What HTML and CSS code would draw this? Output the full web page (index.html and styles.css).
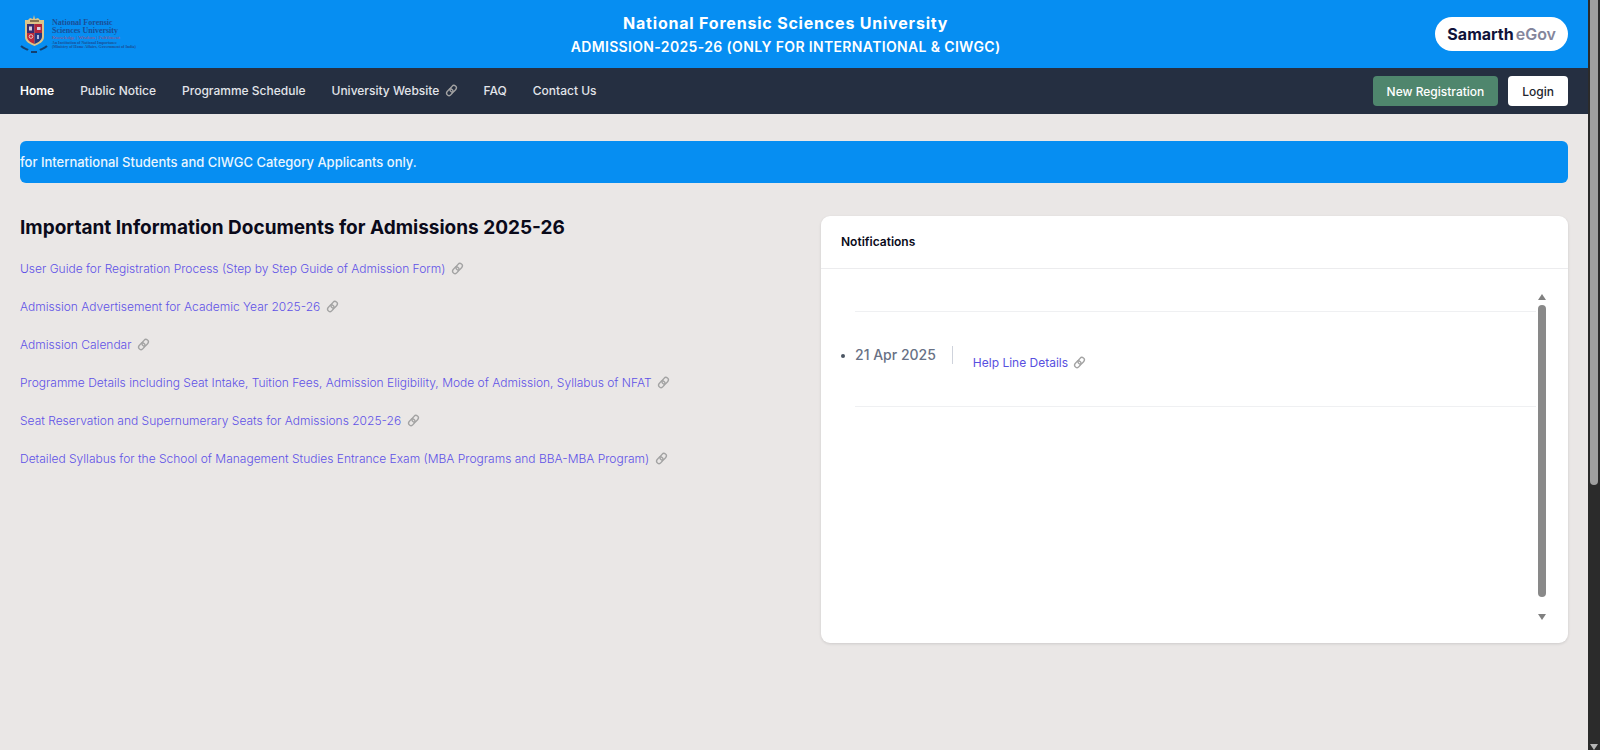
FILE: index.html
```html
<!DOCTYPE html>
<html lang="en">
<head>
<meta charset="utf-8">
<meta name="viewport" content="width=device-width, initial-scale=1">
<title>National Forensic Sciences University</title>
<link rel="stylesheet" href="styles.css">
</head>
<body>
<svg class="defs" aria-hidden="true">
  <symbol id="link" viewBox="0 0 14 14">
    <g fill="none" stroke="currentColor" stroke-width="1.5" transform="rotate(-50 7 7)">
      <rect x="0.6" y="4.2" width="7.6" height="5.2" rx="2.6"/>
      <rect x="5.8" y="4.6" width="7.6" height="5.2" rx="2.6"/>
    </g>
  </symbol>
</svg>
<div class="window">
  <div class="page">
    <header class="top">
      <a class="logo" href="#" aria-label="National Forensic Sciences University">
        <svg class="crest" viewBox="0 0 28 38" aria-hidden="true">
          <path d="M5 5h3l2-2 3 1 1-4 1 4 3-1 2 2h4v17c0 5-5 7-9.500 9-4.500-2-9.500-4-9.500-9z" fill="#dcc48a"/>
          <path d="M10 6h9" stroke="#6b5a3c" stroke-width="1.5"/>
          <path d="M7 9h7.500v9H7z" fill="#3a2a6c"/><path d="M14.500 9H22v9h-7.500z" fill="#b3263c"/>
          <path d="M7 18h7.500v11c-5-2-7.500-4-7.500-8z" fill="#c0283a"/><path d="M14.500 18H22v3c0 4-3 6-7.500 8z" fill="#27377e"/>
          <path d="M9 11.500h3v4H9zM17 12h3.500v3H17z" fill="#d9cfe0"/>
          <circle cx="11" cy="21.500" r="1.800" fill="none" stroke="#e6c9c0"/><path d="M18 20v4" stroke="#d5dcf0" stroke-width="1.600"/>
          <path d="M1 31c3 3 6 3 7 4M11 37h6M20 35c1-1 4-1 7-4" fill="none" stroke="#14406f" stroke-width="2"/>
        </svg>
        <span class="logo-text">
          <span class="logo-name">National Forensic<br>Sciences University</span>
          <span class="logo-motto">Knowledge | Wisdom | Fulfilment</span>
          <span class="logo-note">An Institution of National Importance<br>(Ministry of Home Affairs, Government of India)</span>
        </span>
      </a>
      <div class="title">
        <h1>National Forensic Sciences University</h1>
        <p>ADMISSION-2025-26 (ONLY FOR INTERNATIONAL &amp; CIWGC)</p>
      </div>
      <a class="badge" href="#"><span>Samarth</span><span class="badge-light">eGov</span></a>
    </header>
    <nav class="nav">
      <div class="menu">
        <a class="current" href="#">Home</a>
        <a href="#">Public Notice</a>
        <a href="#">Programme Schedule</a>
        <a href="#">University Website <svg class="icon"><use href="#link"/></svg></a>
        <a href="#">FAQ</a>
        <a href="#">Contact Us</a>
      </div>
      <div class="actions">
        <button class="btn green" type="button">New Registration</button>
        <button class="btn" type="button">Login</button>
      </div>
    </nav>
    <main class="main">
      <div class="ticker">for International Students and CIWGC Category Applicants only.</div>
      <div class="columns">
        <section>
          <h2>Important Information Documents for Admissions 2025-26</h2>
          <div class="docs">
            <a href="#">User Guide for Registration Process (Step by Step Guide of Admission Form) <svg class="icon"><use href="#link"/></svg></a>
            <a href="#">Admission Advertisement for Academic Year 2025-26 <svg class="icon"><use href="#link"/></svg></a>
            <a href="#">Admission Calendar <svg class="icon"><use href="#link"/></svg></a>
            <a href="#">Programme Details including Seat Intake, Tuition Fees, Admission Eligibility, Mode of Admission, Syllabus of NFAT <svg class="icon"><use href="#link"/></svg></a>
            <a href="#">Seat Reservation and Supernumerary Seats for Admissions 2025-26 <svg class="icon"><use href="#link"/></svg></a>
            <a href="#">Detailed Syllabus for the School of Management Studies Entrance Exam (MBA Programs and BBA-MBA Program) <svg class="icon"><use href="#link"/></svg></a>
          </div>
        </section>
        <section class="card">
          <h3>Notifications</h3>
          <div class="card-body">
            <ul class="notices">
              <li>
                <span class="date">21 Apr 2025</span>
                <a href="#">Help Line Details <svg class="icon"><use href="#link"/></svg></a>
              </li>
            </ul>
            <div class="scroller" aria-hidden="true">
              <svg class="arrow" viewBox="0 0 8 6"><path d="M4 0l4 6H0z"/></svg>
              <span class="thumb"></span>
              <svg class="arrow" viewBox="0 0 8 6"><path d="M4 6l4-6H0z"/></svg>
            </div>
          </div>
        </section>
      </div>
    </main>
  </div>
  <div class="page-scroller" aria-hidden="true">
    <span class="page-thumb"></span>
    <svg class="arrow" viewBox="0 0 8 6"><path d="M4 6l4-6H0z"/></svg>
  </div>
</div>
</body>
</html>
```
FILE: styles.css
```css
* { box-sizing: border-box; }
body { margin: 0; background: #eae7e6; color: #0a0a1a; font: 12px/18px Inter, sans-serif; }
h1, h2, h3, p, ul { margin: 0; padding: 0; }
a { color: inherit; text-decoration: none; }
.defs { position: absolute; width: 0; height: 0; }
.window { display: flex; min-height: 100vh; }
.page { flex: 1; min-width: 0; }

.top { display: flex; align-items: center; justify-content: space-between; height: 68px; padding: 0 20px; background: #068ef2; color: #fff; }
.logo { display: flex; align-items: center; gap: 4px; }
.crest { width: 28px; height: 38px; }
.logo-text { display: flex; flex-direction: column; color: #1b4f96; font-family: "Liberation Serif", serif; white-space: nowrap; }
.logo-name { font-size: 8px; line-height: 8px; font-weight: 700; }
.logo-motto { color: #a8477a; font-size: 5px; line-height: 6px; }
.logo-note { font-size: 4px; line-height: 4px; font-weight: 700; }
.title { padding-top: 2px; text-align: center; }
.title h1 { font-size: 16px; line-height: 24px; font-weight: 700; letter-spacing: 0.05em; }
.title p { font-size: 14px; line-height: 24px; font-weight: 600; letter-spacing: 0.025em; }
.badge { display: flex; align-items: center; gap: 2px; height: 34px; padding: 0 12px; border-radius: 17px; background: #fff; color: #10123a; font-size: 16px; font-weight: 700; }
.badge-light { color: #84869c; font-weight: 600; }

.nav { display: flex; align-items: center; justify-content: space-between; height: 46px; padding: 0 20px; background: #252f41; color: #e2e5ea; font-weight: 500; }
.menu { display: flex; gap: 26px; }
.current { color: #fff; font-weight: 600; }
.icon { width: 13px; height: 13px; margin-left: 2px; color: #a3a3a3; vertical-align: -2px; }
.actions { display: flex; gap: 10px; }
.btn { height: 30px; padding: 0 14px; border: 0; border-radius: 4px; background: #fff; color: #22252e; font: 500 12px Inter, sans-serif; }
.green { background: #4f866d; color: #fff; }

.main { padding: 27px 20px; }
.ticker { height: 42px; border-radius: 6px; background: #068ef2; color: #eaf6ff; font-size: 13px; line-height: 42px; font-weight: 500; overflow: hidden; white-space: nowrap; }
.columns { display: grid; grid-template-columns: 1fr 1fr; gap: 54px; align-items: start; margin-top: 33px; }
h2 { font-size: 19px; line-height: 24px; font-weight: 700; }
.docs { display: flex; flex-direction: column; align-items: flex-start; gap: 20px; margin-top: 20px; color: #5f52e6; font-weight: 300; white-space: nowrap; }

.card { border-radius: 9px; background: #fff; box-shadow: 0 1px 3px #0000001f; }
.card h3 { padding: 17px 20px; border-bottom: 1px solid #ececee; font-size: 12px; line-height: 18px; font-weight: 600; }
.card-body { display: flex; padding: 20px 20px 20px 34px; height: 374px; }
.notices { flex: 1; list-style: none; }
.notices li { position: relative; display: flex; margin-top: 22px; padding: 34px 0; border: solid #eff0f2; border-width: 1px 0; }
.notices li::before { content: ""; position: absolute; left: -14px; top: 42px; width: 4px; height: 4px; border-radius: 50%; background: #4b5563; }
.date { align-self: flex-start; padding-right: 16px; border-right: 1px solid #cfd3dc; color: #687185; font-size: 14px; line-height: 18px; font-weight: 500; }
.notices a { margin: 8px 0 0 20px; color: #584fe0; }
.scroller { display: flex; flex-direction: column; align-items: center; width: 12px; padding: 5px 0 3px; }
.arrow { width: 8px; height: 6px; fill: #808080; }
.thumb { width: 8px; height: 292px; margin: 5px 0 auto; border-radius: 4px; background: #898989; }
.page-scroller { display: flex; flex-direction: column; align-items: center; justify-content: space-between; width: 12px; background: #2b2b2b; }
.page-thumb { width: 8px; height: 485px; border-radius: 0 0 4px 4px; background: #9f9f9f; }
.page-scroller .arrow { fill: #b5b5b5; }
```
